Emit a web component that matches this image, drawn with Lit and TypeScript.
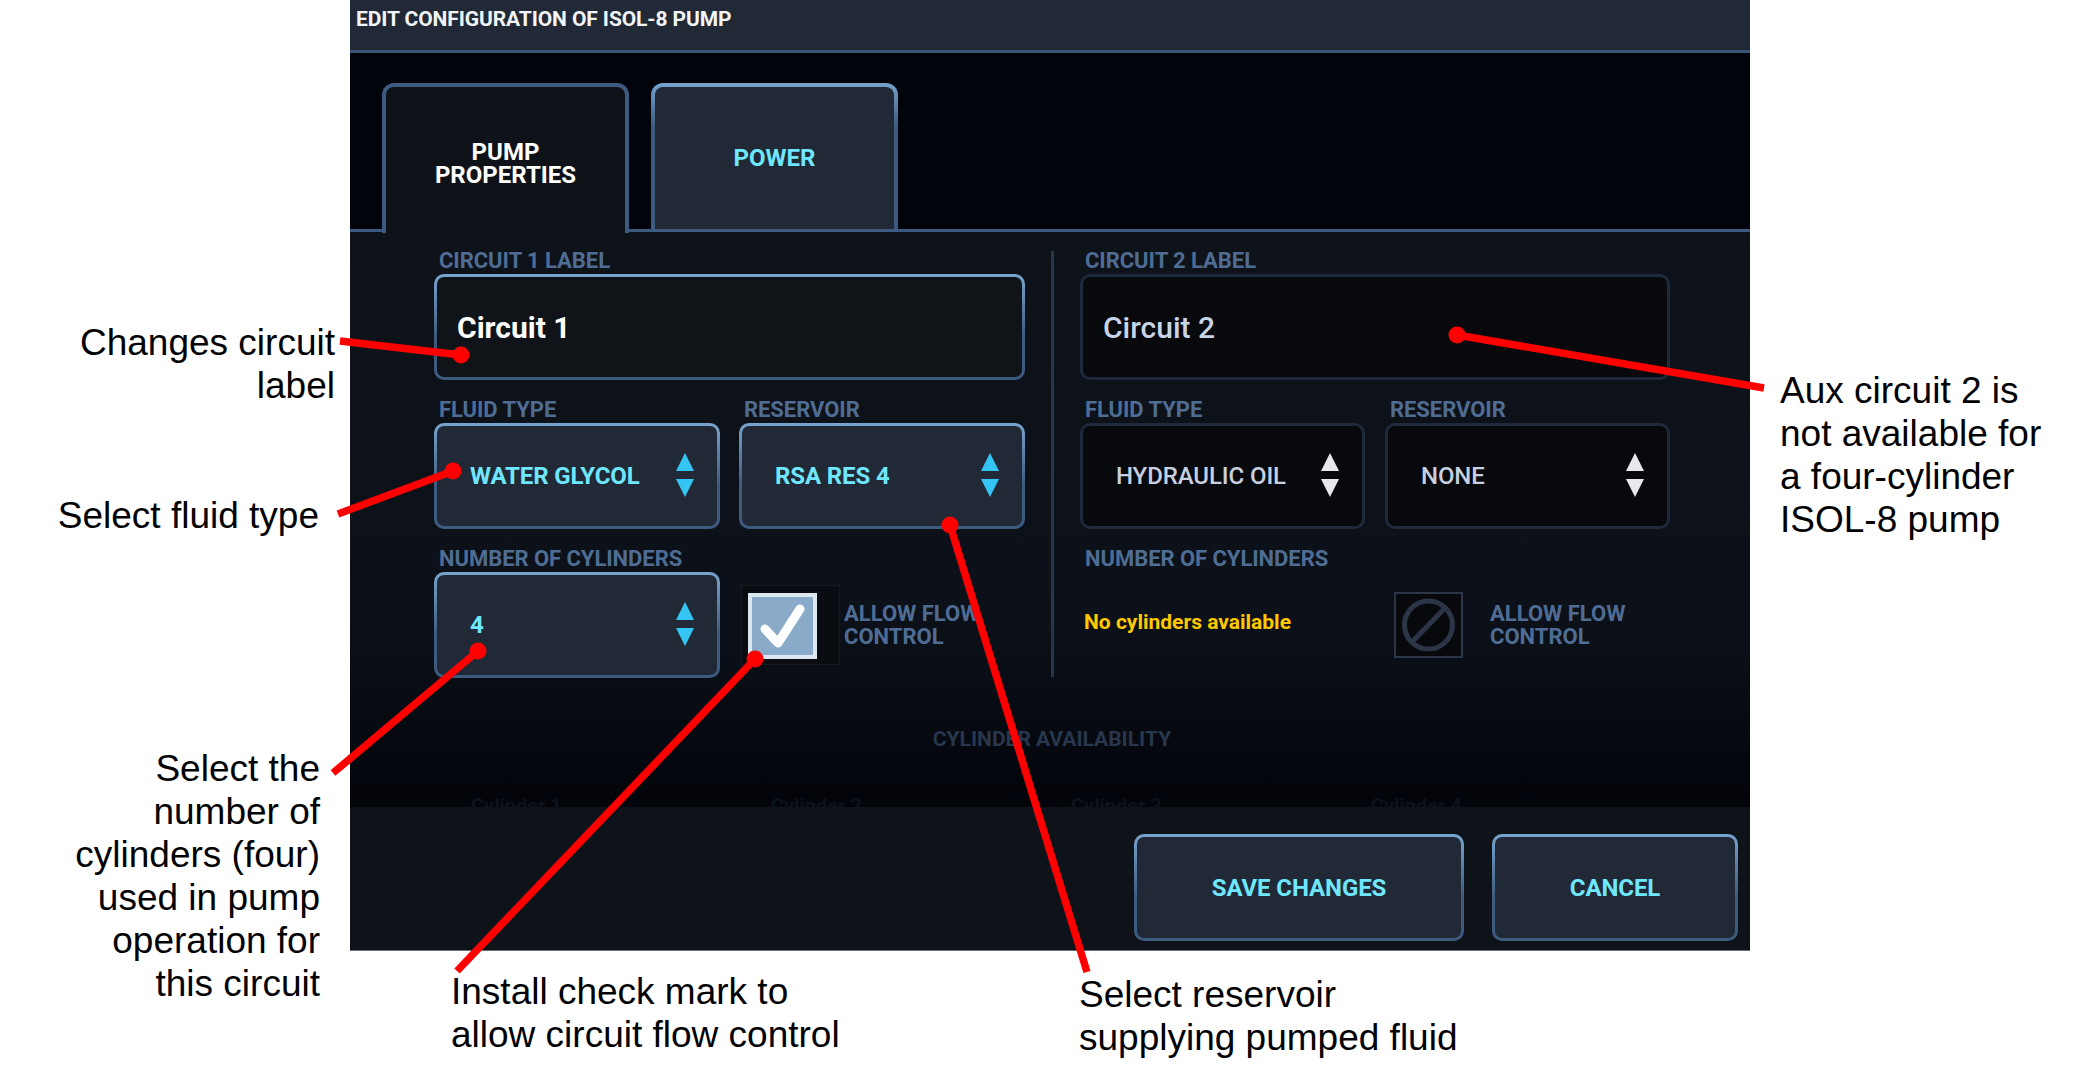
import { LitElement, html, css, svg } from "lit";
import { customElement } from "lit/decorators.js";

const LINES = [
  [340, 341, 461, 355],
  [338, 514, 453, 471],
  [333, 773, 478, 651],
  [457, 971, 755, 659],
  [1087, 972, 950, 525],
  [1764, 388, 1457, 335],
];

const NOTES: { x: number; y: number; right?: boolean; t: string[] }[] = [
  { x: 335, y: 321, right: true, t: ["Changes circuit", "label"] },
  { x: 319, y: 494, right: true, t: ["Select fluid type"] },
  { x: 320, y: 747, right: true, t: ["Select the", "number of", "cylinders (four)", "used in pump", "operation for", "this circuit"] },
  { x: 451, y: 970, t: ["Install check mark to", "allow circuit flow control"] },
  { x: 1079, y: 973, t: ["Select reservoir", "supplying pumped fluid"] },
  { x: 1780, y: 369, t: ["Aux circuit 2 is", "not available for", "a four-cylinder", "ISOL-8 pump"] },
];

const arrows = svg`<path d="M9 0L18 18H0Z"/><path d="M0 26H18L9 44Z"/>`;

@customElement("app-root")
export class AppRoot extends LitElement {
  static styles = css`
    :host { display: block; position: relative; width: 2100px; height: 1070px; background: #fff; overflow: hidden; font-family: Roboto, "Liberation Sans", sans-serif; }
    .page { padding-left: 350px; }
    .panel { width: 1400px; height: 951px; display: flex; flex-direction: column; background: #0e131a; border-bottom: 1px solid #6b7078; box-sizing: border-box; }
    .title { flex: none; background: #222936; border-bottom: 3px solid #3a5478; color: #f2f5f8; font-weight: 700; font-size: 21px; letter-spacing: -0.1px; padding: 9px 6px 0; height: 41px; line-height: 21px; }
    .tabs { height: 179px; flex: none; box-sizing: border-box; display: flex; align-items: flex-end; gap: 22px; padding-left: 32px; background: #01040a; border-bottom: 3px solid #3d5a80; }
    .tab { width: 247px; height: 146px; box-sizing: border-box; border: 4px solid transparent; border-bottom: 0; border-radius: 12px 12px 0 0; display: flex; align-items: center; justify-content: center; text-align: center; font-weight: 700; font-size: 24px; line-height: 23px; }
    .tab.active { height: 150px; margin-bottom: -4px; background: #0f1319; border-color: #3d5a80; color: #fff; position: relative; padding-top: 8px; }
    .tab.idle { background: linear-gradient(#222936, #222936) padding-box, linear-gradient(#76a4cd, #3d5a80 30%) border-box; color: #6fe7ff; }
    .body { height: 575px; flex: none; overflow: hidden; box-sizing: border-box; padding: 16px 0 0 84px; background: linear-gradient(#0e131a 0, #0c1119 68%, #02040a 100%); }
    .cols { display: flex; }
    .col { display: flex; flex-direction: column; gap: 17px; }
    .col.a { width: 591px; }
    .col.b { width: 590px; }
    .divider { width: 3px; margin: 3px 26px 0 26px; background: #26364c; height: 426px; }
    .field-label { height: 26px; line-height: 26px; padding-left: 5px; color: #4f6d94; font-weight: 700; font-size: 22px; letter-spacing: -0.05px; white-space: nowrap; }
    .box { box-sizing: border-box; height: 106px; border: 3px solid transparent; border-radius: 10px; display: flex; align-items: center; }
    .on { background: linear-gradient(#222936, #222936) padding-box, linear-gradient(#77a5cf, #3d5a80 60%) border-box; color: #6fe7ff; }
    .off { background: #07090d; border-color: #1e2a3b; color: #c8d0e0; }
    .input { padding: 0 0 0 20px; font-weight: 700; font-size: 30px; }
    .input.on { background: linear-gradient(#101419, #101419) padding-box, linear-gradient(#77a5cf, #3d5a80 60%) border-box; color: #fff; }
    .input.off { color: #c8d4e8; font-weight: 500; }
    .pair { display: grid; grid-template-columns: 1fr 1fr; }
    .a .pair { column-gap: 19px; }
    .b .pair { column-gap: 20px; }
    .select { justify-content: space-between; padding: 0 23px 0 33px; font-weight: 700; font-size: 24px; letter-spacing: -0.1px; white-space: nowrap; }
    .select.off { font-weight: 500; }
    .select svg { width: 18px; height: 44px; flex: none; margin-bottom: 2px; }
    .select.on svg { fill: #35c5f5; }
    .select.off svg { fill: #e6e8ee; }
    .row3 { display: flex; align-items: center; height: 106px; }
    .none { color: #ffc800; font-weight: 700; font-size: 21px; padding-left: 4px; padding-bottom: 6px; box-sizing: border-box; }
    .flow { margin-left: 2px; }
    .allow { margin-left: 4px; color: #4f6d94; font-weight: 700; font-size: 22px; line-height: 23px; white-space: nowrap; }
    .wrap { width: 99px; height: 80px; box-sizing: border-box; flex: none; padding: 7px; }
    .wrap.live { background: #090c11; border: 1px dotted #20262f; padding: 7px 6px; }
    .chk { width: 69px; height: 66px; box-sizing: border-box; }
    .chk.checked { background: #89aac9; border: 4px solid #dde7f0; }
    .chk.blocked { background: #07090d; border: 2px solid #2b3648; }
    .chk svg { display: block; width: 100%; height: 100%; }
    .avail { margin-top: 51px; text-align: center; width: 1236px; color: #28374e; font-weight: 700; font-size: 21px; line-height: 20px; }
    .ghost { display: grid; grid-template-columns: repeat(4, 300px); margin: 45px 0 0 37px; color: #0c121b; font-weight: 700; font-size: 20px; line-height: 24px; }
    .footer { flex: 1; display: flex; justify-content: flex-end; gap: 28px; padding: 27px 12px 0 0; background: #0e131a; }
    .btn { width: 330px; height: 107px; box-sizing: border-box; border: 3px solid transparent; border-radius: 10px; display: flex; align-items: center; justify-content: center; font-weight: 700; font-size: 24px; letter-spacing: -0.1px; }
    .btn.cancel { width: 246px; }
    .overlay { position: absolute; left: 0; top: 0; width: 2100px; height: 1070px; pointer-events: none; }
    .note { position: absolute; color: #000; font-family: "Liberation Sans", Arial, sans-serif; font-size: 37px; line-height: 43px; white-space: nowrap; }
    .note.right { text-align: right; transform: translateX(-100%); }
  `;

  private select(text: string, on: boolean) {
    return html`<div class="box select ${on ? "on" : "off"}"><span>${text}</span><svg viewBox="0 0 18 44">${arrows}</svg></div>`;
  }

  render() {
    return html`
      <div class="page">
        <div class="panel">
          <div class="title">EDIT CONFIGURATION OF ISOL-8 PUMP</div>
          <div class="tabs">
            <div class="tab active">PUMP<br />PROPERTIES</div>
            <div class="tab idle">POWER</div>
          </div>
          <div class="body">
            <div class="cols">
              <div class="col a">
                <div><div class="field-label">CIRCUIT 1 LABEL</div><div class="box input on">Circuit 1</div></div>
                <div class="pair">
                  <div><div class="field-label">FLUID TYPE</div>${this.select("WATER GLYCOL", true)}</div>
                  <div><div class="field-label">RESERVOIR</div>${this.select("RSA RES 4", true)}</div>
                </div>
                <div class="pair">
                  <div><div class="field-label">NUMBER OF CYLINDERS</div>${this.select("4", true)}</div>
                  <div>
                    <div class="field-label"></div>
                    <div class="row3 flow">
                      <div class="wrap live">
                        <div class="chk checked">
                          <svg viewBox="0 0 61 58"><path d="M13 32L26 46L48 12" fill="none" stroke="#fff" stroke-width="9" stroke-linecap="round" stroke-linejoin="round"/></svg>
                        </div>
                      </div>
                      <div class="allow">ALLOW FLOW<br />CONTROL</div>
                    </div>
                  </div>
                </div>
              </div>
              <div class="divider"></div>
              <div class="col b">
                <div><div class="field-label">CIRCUIT 2 LABEL</div><div class="box input off">Circuit 2</div></div>
                <div class="pair">
                  <div><div class="field-label">FLUID TYPE</div>${this.select("HYDRAULIC OIL", false)}</div>
                  <div><div class="field-label">RESERVOIR</div>${this.select("NONE", false)}</div>
                </div>
                <div class="pair">
                  <div>
                    <div class="field-label">NUMBER OF CYLINDERS</div>
                    <div class="row3 none">No cylinders available</div>
                  </div>
                  <div>
                    <div class="field-label"></div>
                    <div class="row3 flow">
                      <div class="wrap">
                        <div class="chk blocked">
                          <svg viewBox="0 0 65 62"><circle cx="32.5" cy="31" r="24" fill="none" stroke="#2c3548" stroke-width="5"/><path d="M16 48L49 14" stroke="#2c3548" stroke-width="5"/></svg>
                        </div>
                      </div>
                      <div class="allow">ALLOW FLOW<br />CONTROL</div>
                    </div>
                  </div>
                </div>
              </div>
            </div>
            <div class="avail">CYLINDER AVAILABILITY</div>
            <div class="ghost"><span>Cylinder 1</span><span>Cylinder 2</span><span>Cylinder 3</span><span>Cylinder 4</span></div>
          </div>
          <div class="footer">
            <div class="btn on">SAVE CHANGES</div>
            <div class="btn on cancel">CANCEL</div>
          </div>
        </div>
      </div>
      ${NOTES.map(
        (n) => html`<div class="note ${n.right ? "right" : ""}" style="left:${n.x}px;top:${n.y}px">${n.t.map((l) => html`<div>${l}</div>`)}</div>`
      )}
      <svg class="overlay" viewBox="0 0 2100 1070">
        ${LINES.map(
          ([a, b, c, d]) => svg`<line x1=${a} y1=${b} x2=${c} y2=${d} stroke="#fe0000" stroke-width="7.5"/><circle cx=${c} cy=${d} r="8.5" fill="#fe0000"/>`
        )}
      </svg>
    `;
  }
}
